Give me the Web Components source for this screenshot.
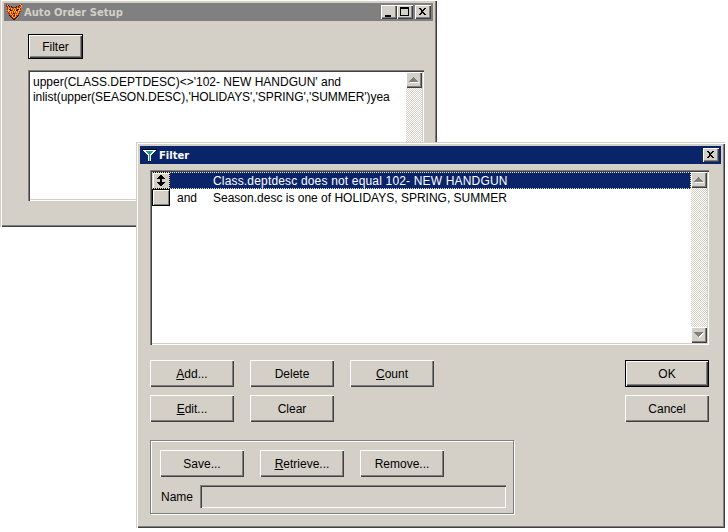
<!DOCTYPE html>
<html>
<head>
<meta charset="utf-8">
<title>Auto Order Setup</title>
<style>
  html, body { margin: 0; padding: 0; background: #fff; }
  body { width: 728px; height: 532px; position: relative; overflow: hidden; font: 12px "Liberation Sans", Arial, sans-serif; color: #000; }
  #setup { position: absolute; left: 0; top: -1px; width: 437px; height: 228px; }
  #filter { position: absolute; left: 136px; top: 142px; width: 589px; height: 386px; }
</style>
</head>
<body>

<win-frame id="setup" heading="Auto Order Setup" inactive>
  <fox-icon slot="icon"></fox-icon>
  <setup-body></setup-body>
</win-frame>

<win-frame id="filter" heading="Filter">
  <svg slot="icon" width="16" height="16" viewBox="0 0 16 16" shape-rendering="crispEdges">
    <path d="M0 2h15v1h-1v1h-1v1h-1v1h-1v1h-1v1H9v7H6V8H5V7H4V6H3V5H2V4H1V3H0z" fill="#000"/>
    <path d="M1 3h13v1h-1v1h-1v1h-1v1h-1v1H9v6H6V8H5V7H4V6H3V5H2V4H1z" fill="#fff"/>
    <path d="M4 4h7v1h-1v1H9v1H8v7H7V7H6V6H5V5H4z" fill="#1f9a9a"/>
  </svg>
  <filter-body></filter-body>
</win-frame>

<script>
  // raised/sunken bevels are repeated in a few elements, keep them in one place
  const bevelRaised = 'box-shadow: inset 1px 1px 0 #fff, inset -1px -1px 0 #404040, inset -2px -2px 0 #808080;';
  const bevelSunken = 'box-shadow: inset 1px 1px 0 #808080, inset 2px 2px 0 #404040, inset -1px -1px 0 #fff, inset -2px -2px 0 #d4d0c8;';

  class FoxIcon extends HTMLElement {
    constructor() {
      super();
      const colors = { r: '#d0200f', y: '#f4c41c', k: '#2a0c06', o: '#f0701c' };
      const rows = [
        'r.............yr',
        'ryk..........kry',
        'rrok.k....k.kory',
        '.ryrorkrrkrorry.',
        '.royryoryoryoyr.',
        '.rykkyryryrkkyr.',
        '.oyykkryrykkyyo.',
        '.ryryoyryoyryrr.',
        '..royryryryoyr..',
        '..rryrokkoryrr..',
        '...royryryoyr...',
        '...krryrkyrrk...',
        '....kryrryrk....',
        '.....kryyrk.....',
        '......krrk......',
        '.......kk.......'
      ];
      let rects = '';
      rows.forEach((row, y) => {
        [...row].forEach((c, x) => {
          if (colors[c]) rects += `<rect x="${x}" y="${y}" width="1" height="1" fill="${colors[c]}"/>`;
        });
      });
      this.attachShadow({ mode: 'open' }).innerHTML = `
        <style>
          :host { display: block; width: 16px; height: 16px; }
          svg { display: block; }
        </style>
        <svg width="16" height="16" viewBox="0 0 16 16" shape-rendering="crispEdges">${rects}</svg>`;
    }
  }

  class WinFrame extends HTMLElement {
    constructor() {
      super();
      const inactive = this.hasAttribute('inactive');
      const root = this.attachShadow({ mode: 'open' });
      const buttons = inactive ? `
        <win-caption-btn kind="min"></win-caption-btn>
        <win-caption-btn kind="max"></win-caption-btn>
        <win-caption-btn kind="close" class="gap"></win-caption-btn>`
        : `<win-caption-btn kind="close"></win-caption-btn>`;
      root.innerHTML = `
        <style>
          :host {
            display: flex;
            flex-direction: column;
            box-sizing: border-box;
            padding: 4px;
            background: #d4d0c8;
            box-shadow: inset 1px 1px 0 #d4d0c8, inset 2px 2px 0 #fff, inset -1px -1px 0 #404040, inset -2px -2px 0 #808080;
          }
          .bar {
            display: flex;
            align-items: center;
            height: 18px;
            flex: none;
            padding: 0 2px;
            background: ${inactive ? '#808080' : '#0a246a'};
            color: ${inactive ? '#d4d0c8' : '#fff'};
            font: bold 10px "DejaVu Sans", Verdana, sans-serif;
          }
          .icon { display: flex; width: 16px; height: 16px; margin-right: ${inactive ? 2 : 1}px; }
          .title { flex: 1; white-space: nowrap; }
          .content { flex: 1; position: relative; min-height: 0; }
          win-caption-btn.gap { margin-left: 2px; }
        </style>
        <div class="bar">
          <span class="icon"><slot name="icon"></slot></span>
          <span class="title">${this.getAttribute('heading')}</span>
          ${buttons}
        </div>
        <div class="content"><slot></slot></div>`;
    }
  }

  class WinCaptionBtn extends HTMLElement {
    constructor() {
      super();
      const paths = {
        min: '<path d="M2 8h6v2H2z"/>',
        max: '<path d="M1 0h9v9H1zM2 2v6h7V2z" fill-rule="evenodd"/>',
        close: '<path d="M1 1h2l2 2 2-2h2L6 4v1l3 3H7L5 6 3 8H1l3-3V4z"/>'
      };
      this.attachShadow({ mode: 'open' }).innerHTML = `
        <style>
          :host {
            display: flex;
            box-sizing: border-box;
            width: 16px;
            height: 14px;
            padding: 2px 0 0 2px;
            background: #d4d0c8;
            ${bevelRaised}
          }
          svg { display: block; }
        </style>
        <svg width="11" height="10" viewBox="0 0 11 10" shape-rendering="crispEdges">${paths[this.getAttribute('kind')] || ''}</svg>`;
    }
  }

  class WinButton extends HTMLElement {
    constructor() {
      super();
      const isDefault = this.hasAttribute('default');
      this.attachShadow({ mode: 'open' }).innerHTML = `
        <style>
          :host {
            display: flex;
            align-items: center;
            justify-content: center;
            box-sizing: border-box;
            width: 84px;
            height: 27px;
            flex: none;
            background: #d4d0c8;
            font: 12px "Liberation Sans", Arial, sans-serif;
            ${isDefault
              ? 'border: 1px solid #000; box-shadow: inset 1px 1px 0 #fff, inset -1px -1px 0 #404040, inset -2px -2px 0 #808080;'
              : bevelRaised}
          }
        </style>
        <slot></slot>`;
    }
  }

  class WinScrollbar extends HTMLElement {
    constructor() {
      super();
      // disabled arrows: gray glyph with a white copy one pixel down and right
      const arrow = (d) => `<div class="btn"><svg width="10" height="6" viewBox="0 0 10 6" shape-rendering="crispEdges"><path d="${d}" fill="#fff" transform="translate(1 1)"/><path d="${d}" fill="#808080"/></svg></div>`;
      this.attachShadow({ mode: 'open' }).innerHTML = `
        <style>
          :host {
            display: flex;
            flex-direction: column;
            width: 16px;
            flex: none;
            background-color: #fff;
            background-image: conic-gradient(#d4d0c8 25%, #fff 0 50%, #d4d0c8 0 75%, #fff 0);
            background-size: 2px 2px;
          }
          .btn {
            display: flex;
            align-items: center;
            justify-content: center;
            height: 16px;
            background: #d4d0c8;
            ${bevelRaised}
          }
          .track { flex: 1; }
        </style>
        ${arrow('M4 0h1v1h1v1h1v1h1v1h1v1H0V4h1V3h1V2h1V1h1z')}
        <div class="track"></div>
        ${arrow('M0 0h9v1H8v1H7v1H6v1H5v1H4V4H3V3H2V2H1V1H0z')}`;
    }
  }

  class SetupBody extends HTMLElement {
    constructor() {
      super();
      this.attachShadow({ mode: 'open' }).innerHTML = `
        <style>
          :host {
            display: flex;
            flex-direction: column;
            align-items: flex-start;
            height: 100%;
            padding: 13px 0 0 24px;
            box-sizing: border-box;
          }
          win-button { width: 55px; height: 25px; }
          .memo {
            display: flex;
            box-sizing: border-box;
            width: 396px;
            height: 131px;
            margin-top: 11px;
            padding: 2px;
            background: #fff;
            ${bevelSunken}
          }
          .text { flex: 1; padding: 3px 0 0 3px; line-height: 15px; white-space: nowrap; overflow: hidden; }
          .tight { letter-spacing: -0.05px; }
        </style>
        <win-button default>Filter</win-button>
        <div class="memo">
          <div class="text">upper(CLASS.DEPTDESC)&lt;&gt;'102- NEW HANDGUN' and<br><span class="tight">inlist(upper(SEASON.DESC),'HOLIDAYS','SPRING','SUMMER')yea</span></div>
          <win-scrollbar></win-scrollbar>
        </div>`;
    }
  }

  class FilterRow extends HTMLElement {
    constructor() {
      super();
      const selected = this.hasAttribute('selected');
      const sortIcon = `<svg width="8" height="11" viewBox="0 0 8 11" shape-rendering="crispEdges"><path d="M3 0h2v1h1v1h1v1h1v1H5v3h3v1H7v1H6v1H5v1H3v-1H2V9H1V8H0V7h3V4H0V3h1V2h1V1h1z"/></svg>`;
      this.attachShadow({ mode: 'open' }).innerHTML = `
        <style>
          :host {
            display: flex;
            align-items: center;
            height: 17px;
            flex: none;
            box-sizing: border-box;
            background: ${selected ? '#0a246a' : '#fff'};
            color: ${selected ? '#fff' : '#000'};
            ${selected ? 'outline: 1px dotted #f0e8b0; outline-offset: -1px; letter-spacing: 0.17px;' : ''}
          }
          .cell {
            display: flex;
            align-items: center;
            justify-content: center;
            box-sizing: border-box;
            width: 18px;
            height: 17px;
            flex: none;
            color: #000;
            background: #d4d0c8;
            ${selected
              ? 'border: 1px dotted #000; box-shadow: inset 1px 1px 0 #fff;'
              : 'border: 1px solid #000; box-shadow: inset 1px 1px 0 #fff, inset -1px -1px 0 #808080;'}
          }
          .op { width: 36px; margin-left: 7px; flex: none; }
          .desc { white-space: nowrap; }
        </style>
        <div class="cell">${selected ? sortIcon : ''}</div>
        <span class="op">${this.getAttribute('op') || ''}</span>
        <span class="desc"><slot></slot></span>`;
    }
  }

  class FilterBody extends HTMLElement {
    constructor() {
      super();
      this.attachShadow({ mode: 'open' }).innerHTML = `
        <style>
          :host {
            display: flex;
            flex-direction: column;
            height: 100%;
            box-sizing: border-box;
            padding: 6px 12px 0 10px;
          }
          .list {
            display: flex;
            box-sizing: border-box;
            height: 175px;
            padding: 2px;
            width: 559px;
            background: #fff;
            ${bevelSunken}
          }
          .rows { flex: 1; display: flex; flex-direction: column; }
          .actions { display: flex; justify-content: space-between; margin-top: 15px; }
          .grid { display: grid; grid-template-columns: repeat(3, 84px); grid-auto-rows: 27px; gap: 8px 16px; }
          .side { display: flex; flex-direction: column; gap: 8px; }
          .group {
            display: flex;
            flex-direction: column;
            box-sizing: border-box;
            width: 364px;
            height: 74px;
            margin-top: 18px;
            padding: 9px 7px 0 9px;
            border: 1px solid #808080;
            box-shadow: inset 1px 1px 0 #fff, 1px 1px 0 #fff;
          }
          .group .btns { display: flex; gap: 16px; }
          .name { display: flex; align-items: center; margin-top: 8px; }
          .name span { width: 40px; flex: none; padding-left: 1px; box-sizing: border-box; }
          .field {
            flex: 1;
            height: 23px;
            background: #d4d0c8;
            ${bevelSunken}
          }
        </style>
        <div class="list">
          <div class="rows">
            <filter-row selected>Class.deptdesc does not equal 102- NEW HANDGUN</filter-row>
            <filter-row op="and">Season.desc is one of HOLIDAYS, SPRING, SUMMER</filter-row>
          </div>
          <win-scrollbar></win-scrollbar>
        </div>
        <div class="actions">
          <div class="grid">
            <win-button><u>A</u>dd...</win-button>
            <win-button>Delete</win-button>
            <win-button><u>C</u>ount</win-button>
            <win-button><u>E</u>dit...</win-button>
            <win-button>Clear</win-button>
          </div>
          <div class="side">
            <win-button default>OK</win-button>
            <win-button>Cancel</win-button>
          </div>
        </div>
        <div class="group">
          <div class="btns">
            <win-button>Save...</win-button>
            <win-button><u>R</u>etrieve...</win-button>
            <win-button>Remove...</win-button>
          </div>
          <div class="name">
            <span>Name</span>
            <div class="field"></div>
          </div>
        </div>`;
    }
  }

  customElements.define('fox-icon', FoxIcon);
  customElements.define('win-caption-btn', WinCaptionBtn);
  customElements.define('win-button', WinButton);
  customElements.define('win-scrollbar', WinScrollbar);
  customElements.define('filter-row', FilterRow);
  customElements.define('setup-body', SetupBody);
  customElements.define('filter-body', FilterBody);
  customElements.define('win-frame', WinFrame);
</script>
</body>
</html>
